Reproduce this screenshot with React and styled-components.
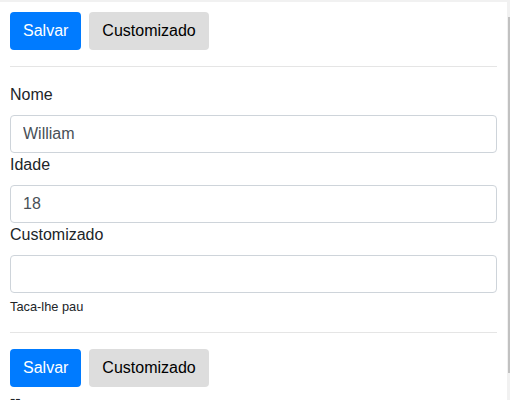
import React from 'react';
import styled, {createGlobalStyle} from "styled-components";

const GlobalStyle = createGlobalStyle`
  html, body {
    margin: 0;
    overflow: hidden;
    background: #f1f1f1;
  }

  body {
    font-family: 'Liberation Sans', Arial, sans-serif;
    font-size: 16px;
    line-height: 1.5;
    color: #212529;
  }

  * {
    box-sizing: border-box;
  }
`;

const Page = styled.div`
  margin-top: 2px;
  width: 507px;
  min-height: 398px;
  background: #fff;
  padding: 10px;
`;

const ButtonBar = styled.div`
  display: flex;
  gap: 8px;
`;

const Button = styled.button`
  font-family: inherit;
  font-size: 16px;
  line-height: 24px;
  padding: 6px 12px;
  border: 1px solid transparent;
  border-radius: 4px;
  color: ${(props) => (props.$primary ? "#fff" : "#000")};
  background: ${(props) => (props.$primary ? "#007bff" : "#dddddd")};
  cursor: pointer;
`;

const Divider = styled.hr`
  margin: 16px 0;
  border: 0;
  border-top: 1px solid rgba(0, 0, 0, 0.1);
`;

const Label = styled.label`
  display: block;
  margin-bottom: 8px;
`;

const Input = styled.input`
  display: block;
  width: 100%;
  height: 38px;
  padding: 6px 12px;
  font-family: inherit;
  font-size: 16px;
  line-height: 24px;
  color: #495057;
  background: #fff;
  border: 1px solid #ced4da;
  border-radius: 4px;

  &:focus {
    outline: none;
  }
`;

const HelpText = styled.small`
  display: block;
  margin-top: 4px;
  font-size: 12.8px;
  line-height: 1.5;
  color: #212529;
`;

const Footer = styled.p`
  margin: 0;
`;

/* fake thin scrollbar over the right edge */
const ScrollThumb = styled.div`
  position: fixed;
  top: 17px;
  right: 0;
  width: 2px;
  height: 356px;
  background: #c1c1c1;
`;

function Buttons() {
  return (
    <ButtonBar>
      <Button $primary>Salvar</Button>
      <Button>Customizado</Button>
    </ButtonBar>
  )
}

function Field({label, value, help}) {
  return (
    <div>
      <Label>{label}</Label>
      <Input type="text" defaultValue={value}/>
      {help && <HelpText>{help}</HelpText>}
    </div>
  )
}

export default function App() {
  return (
    <>
      <GlobalStyle/>
      <Page>
        <Buttons/>
        <Divider/>
        <Field label="Nome" value="William"/>
        <Field label="Idade" value="18"/>
        <Field label="Customizado" value="" help="Taca-lhe pau"/>
        <Divider/>
        <Buttons/>
        <Footer>--</Footer>
      </Page>
      <ScrollThumb/>
    </>
  )
}
